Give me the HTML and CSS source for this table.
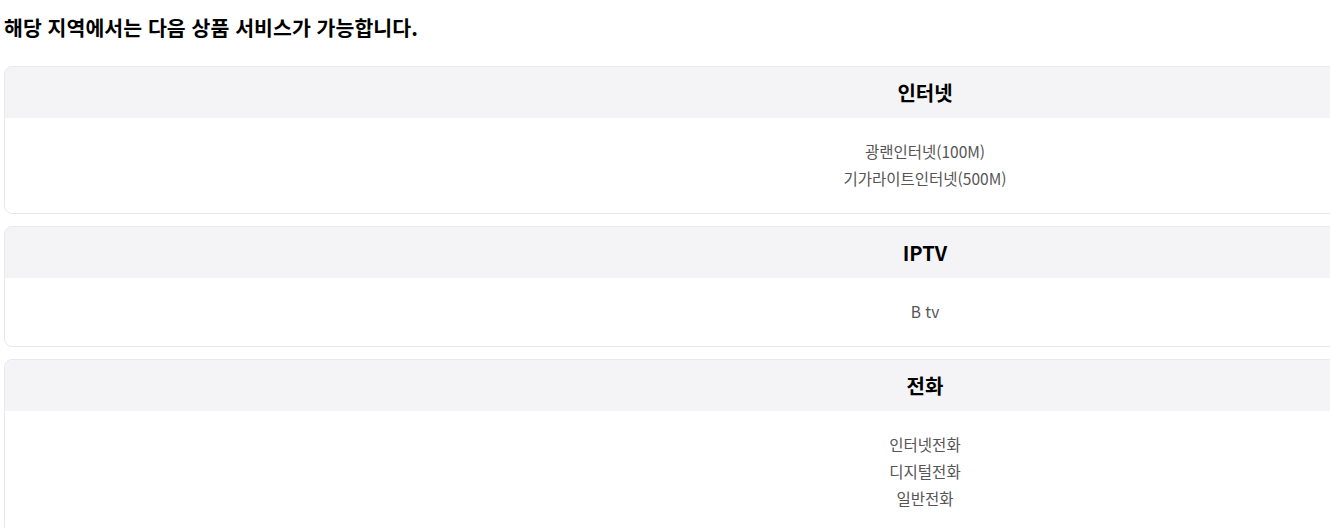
FILE: index.html
```html
<!DOCTYPE html>
<html lang="ko">
<head>
<meta charset="utf-8">
<link rel="stylesheet" href="styles.css">
</head>
<body>
<div class="page">
  <h1 class="title">해당 지역에서는 다음 상품 서비스가 가능합니다.</h1>
  <div class="list">
    <section class="card">
      <div class="card-head">인터넷</div>
      <div class="card-body">
        <div class="item">광랜인터넷(100M)</div>
        <div class="item">기가라이트인터넷(500M)</div>
      </div>
    </section>
    <section class="card">
      <div class="card-head">IPTV</div>
      <div class="card-body">
        <div class="item">B tv</div>
      </div>
    </section>
    <section class="card">
      <div class="card-head">전화</div>
      <div class="card-body">
        <div class="item">인터넷전화</div>
        <div class="item">디지털전화</div>
        <div class="item">일반전화</div>
      </div>
    </section>
  </div>
</div>
</body>
</html>
```
FILE: styles.css
```css
html, body {
  margin: 0;
  padding: 0;
  background: #fff;
  overflow: hidden;
}
body {
  font-family: "Noto Sans CJK KR", "Noto Sans", sans-serif;
  color: #000;
}
.page {
  padding: 0 4px;
  width: 1842px;
}
.title {
  margin: 0;
  padding-top: 13px;
  font-size: 20.5px;
  line-height: 28px;
  font-weight: 700;
  height: 53px;
  letter-spacing: 0.05px;
}
.list {
  display: flex;
  flex-direction: column;
  gap: 12px;
}
.card {
  border: 1px solid #e8e8ea;
  border-radius: 8px;
  overflow: hidden;
}
.card-head {
  background: #f4f4f6;
  height: 51px;
  display: flex;
  align-items: center;
  justify-content: center;
  font-size: 20px;
  font-weight: 700;
}
.card-body {
  padding: 20px 0 21px;
  text-align: center;
}
.item {
  font-size: 15.5px;
  line-height: 27px;
  color: #555;
}
```
